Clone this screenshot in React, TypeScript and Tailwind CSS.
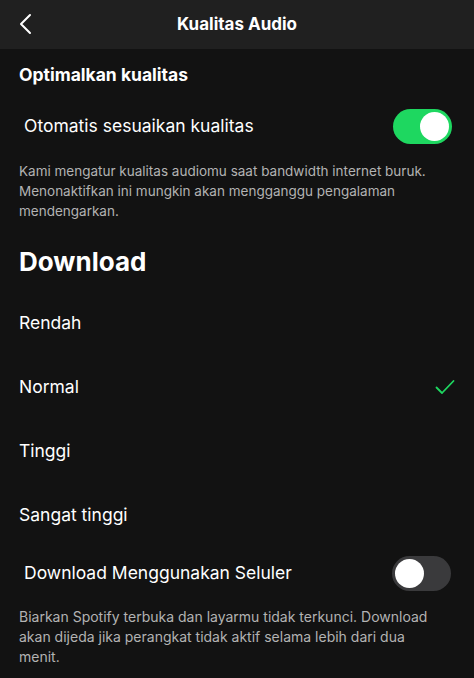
import React, { useState } from "react";

const options = ["Rendah", "Normal", "Tinggi", "Sangat tinggi"];

const Toggle: React.FC<{ on: boolean; onClick: () => void }> = ({ on, onClick }) => (
  <button
    onClick={onClick}
    className={`w-[59px] h-[35px] rounded-full p-[3px] flex items-center ${
      on ? "bg-[#1ed760] justify-end" : "bg-[#3a3a3c] justify-start"
    }`}
  >
    <span className="w-[29px] h-[29px] rounded-full bg-white block" />
  </button>
);

const App: React.FC = () => {
  const [auto, setAuto] = useState<boolean>(true);
  const [cellular, setCellular] = useState<boolean>(false);
  const [quality, setQuality] = useState<string>("Normal");

  return (
    <div
      className="w-full min-h-[678px] bg-[#121212] text-white"
      style={{ fontFamily: "Inter, 'Noto Sans', sans-serif" }}
    >
      {/* header */}
      <div className="h-[49px] bg-[#202020] flex items-center relative">
        <button className="absolute left-[18px] top-[13px] text-white">
          <svg width="16" height="22" viewBox="0 0 16 22" fill="none">
            <path d="M12 2L3 11l9 9" stroke="white" strokeWidth="2" strokeLinecap="round" strokeLinejoin="round" />
          </svg>
        </button>
        <h1 className="w-full text-center text-[17px] font-bold">Kualitas Audio</h1>
      </div>

      <div className="px-[19px]">
        <h2 className="text-[17.5px] font-bold mt-[14px] leading-[24px]">Optimalkan kualitas</h2>

        <div className="flex items-center justify-between pl-[5px] pr-[3px] mt-[22px]">
          <span className="text-[17.5px]">Otomatis sesuaikan kualitas</span>
          <Toggle on={auto} onClick={() => setAuto(!auto)} />
        </div>

        <p className="text-[13.5px] leading-[20px] text-[#b3b3b3] mt-[17px]">
          Kami mengatur kualitas audiomu saat bandwidth internet buruk. Menonaktifkan ini mungkin akan
          mengganggu pengalaman mendengarkan.
        </p>

        <h2 className="text-[26px] font-bold leading-[32px] mt-[25px]">Download</h2>

        <div className="mt-[13px]">
          {options.map((o) => (
            <div
              key={o}
              onClick={() => setQuality(o)}
              className="h-[64px] flex items-center justify-between cursor-pointer"
            >
              <span className="text-[17.5px]">{o}</span>
              {quality === o && (
                <svg width="20" height="16" viewBox="0 0 20 16" fill="none">
                  <path d="M1.5 8.5l5.5 5.5L18.5 2" stroke="#1ed760" strokeWidth="1.8" strokeLinecap="round" strokeLinejoin="round" />
                </svg>
              )}
            </div>
          ))}
        </div>

        <div className="flex items-center justify-between pl-[5px] pr-[4px] mt-[9px]">
          <span className="text-[17.5px]">Download Menggunakan Seluler</span>
          <Toggle on={cellular} onClick={() => setCellular(!cellular)} />
        </div>

        <p className="text-[14px] leading-[20px] text-[#b3b3b3] mt-[16px] max-w-[420px]">
          Biarkan Spotify terbuka dan layarmu tidak terkunci. Download akan dijeda jika perangkat tidak
          aktif selama lebih dari dua menit.
        </p>
      </div>
    </div>
  );
};

export default App;
